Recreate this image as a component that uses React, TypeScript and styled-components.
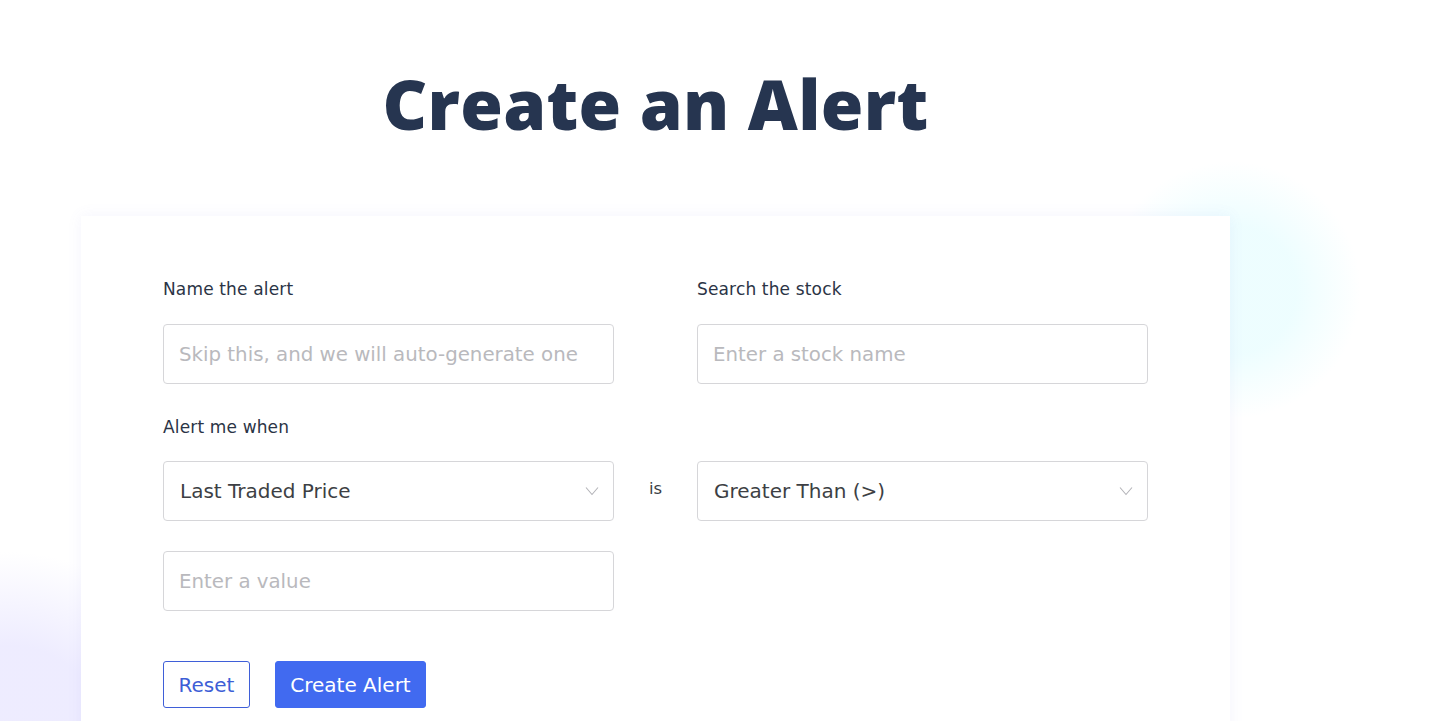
import React from "react";
import styled, { createGlobalStyle } from "styled-components";

const GlobalStyle = createGlobalStyle`
  html, body { margin: 0; padding: 0; background: #ffffff; }
  body { font-family: "DejaVu Sans", "Noto Sans", sans-serif; overflow: hidden; }
  * { box-sizing: border-box; }
`;

const Page = styled.div`
  position: relative;
  width: 1442px;
  height: 721px;
  overflow: hidden;
  background: #ffffff;
`;

const Glow = styled.div<{ $x: number; $y: number; $r: number; $color: string }>`
  position: absolute;
  left: ${(p) => p.$x - p.$r}px;
  top: ${(p) => p.$y - p.$r}px;
  width: ${(p) => p.$r * 2}px;
  height: ${(p) => p.$r * 2}px;
  border-radius: 50%;
  background: radial-gradient(circle, ${(p) => p.$color} 0%, ${(p) => p.$color} 35%, rgba(255,255,255,0) 70%);
  pointer-events: none;
`;

const Container = styled.main`
  position: relative;
  width: 1149px;
  margin-left: 81px;
  display: flex;
  flex-direction: column;
  align-items: stretch;
`;

const Title = styled.h1`
  margin: 58px 0 0;
  height: 158px;
  text-align: center;
  font-family: "Open Sans", sans-serif;
  font-weight: 800;
  font-size: 69px;
  letter-spacing: 0.3px;
  line-height: 90px;
  color: #263550;
`;

const Card = styled.section`
  background: #ffffff;
  box-shadow: 0 0 14px rgba(120, 120, 230, 0.08);
  padding: 61px 82px 40px;
  min-height: 520px;
`;

const Grid = styled.div`
  display: grid;
  grid-template-columns: 451px 83px 451px;
  align-items: center;
`;

const Label = styled.label`
  display: block;
  font-size: 17px;
  line-height: 24px;
  letter-spacing: 0.15px;
  color: #2b3446;
`;

const Field = styled.div<{ $col: number; $mt: number }>`
  grid-column: ${(p) => p.$col};
  margin-top: ${(p) => p.$mt}px;
`;

const Input = styled.input`
  width: 100%;
  height: 60px;
  border: 1px solid #d6d6d9;
  border-radius: 4px;
  padding: 0 15px;
  font-family: "DejaVu Sans", sans-serif;
  font-size: 19.8px;
  color: #3a3a3a;
  outline: none;
  &::placeholder { color: #b9b9bd; }
`;

const SelectBox = styled.div`
  width: 100%;
  height: 60px;
  border: 1px solid #d6d6d9;
  border-radius: 4px;
  padding: 0 14px 0 16px;
  display: flex;
  align-items: center;
  justify-content: space-between;
  font-size: 20px;
  color: #3d3f44;
`;

const Is = styled.span`
  grid-column: 2;
  text-align: center;
  font-size: 16.5px;
  color: #3b3f48;
  margin-top: 22px;
  padding-bottom: 6px;
`;

const Buttons = styled.div`
  display: flex;
  gap: 25px;
  margin-top: 50px;
`;

const Button = styled.button<{ $primary?: boolean; $w: number }>`
  width: ${(p) => p.$w}px;
  height: 47px;
  padding: 0;
  border-radius: 3px;
  font-family: "DejaVu Sans", sans-serif;
  font-size: 20px;
  cursor: pointer;
  border: 1px solid ${(p) => (p.$primary ? "#416af0" : "#3f5fd8")};
  background: ${(p) => (p.$primary ? "#416af0" : "#ffffff")};
  color: ${(p) => (p.$primary ? "#ffffff" : "#3d5ed6")};
`;

const Chevron = () => (
  <svg width="14" height="10" viewBox="0 0 14 10" fill="none">
    <path d="M1 1.5 L7 8.5 L13 1.5" stroke="#b3b3b8" strokeWidth="1.1" />
  </svg>
);

export default function App() {
  return (
    <>
      <GlobalStyle />
      <Page>
        <Glow $x={1232} $y={290} $r={130} $color="rgba(230, 253, 255, 0.7)" />
        <Glow $x={10} $y={740} $r={190} $color="rgba(236, 234, 255, 0.9)" />
        <Container>
          <Title>Create an Alert</Title>
          <Card>
            <Grid>
              <Field $col={1} $mt={0}>
                <Label>Name the alert</Label>
              </Field>
              <Field $col={3} $mt={0}>
                <Label>Search the stock</Label>
              </Field>
              <Field $col={1} $mt={23}>
                <Input placeholder="Skip this, and we will auto-generate one" />
              </Field>
              <Field $col={3} $mt={23}>
                <Input placeholder="Enter a stock name" />
              </Field>
              <Field $col={1} $mt={31}>
                <Label>Alert me when</Label>
              </Field>
              <Field $col={1} $mt={22}>
                <SelectBox>
                  <span>Last Traded Price</span>
                  <Chevron />
                </SelectBox>
              </Field>
              <Is>is</Is>
              <Field $col={3} $mt={22}>
                <SelectBox>
                  <span>Greater Than (&gt;)</span>
                  <Chevron />
                </SelectBox>
              </Field>
              <Field $col={1} $mt={30}>
                <Input placeholder="Enter a value" />
              </Field>
            </Grid>
            <Buttons>
              <Button $w={87}>Reset</Button>
              <Button $primary $w={151}>Create Alert</Button>
            </Buttons>
          </Card>
        </Container>
      </Page>
    </>
  );
}
